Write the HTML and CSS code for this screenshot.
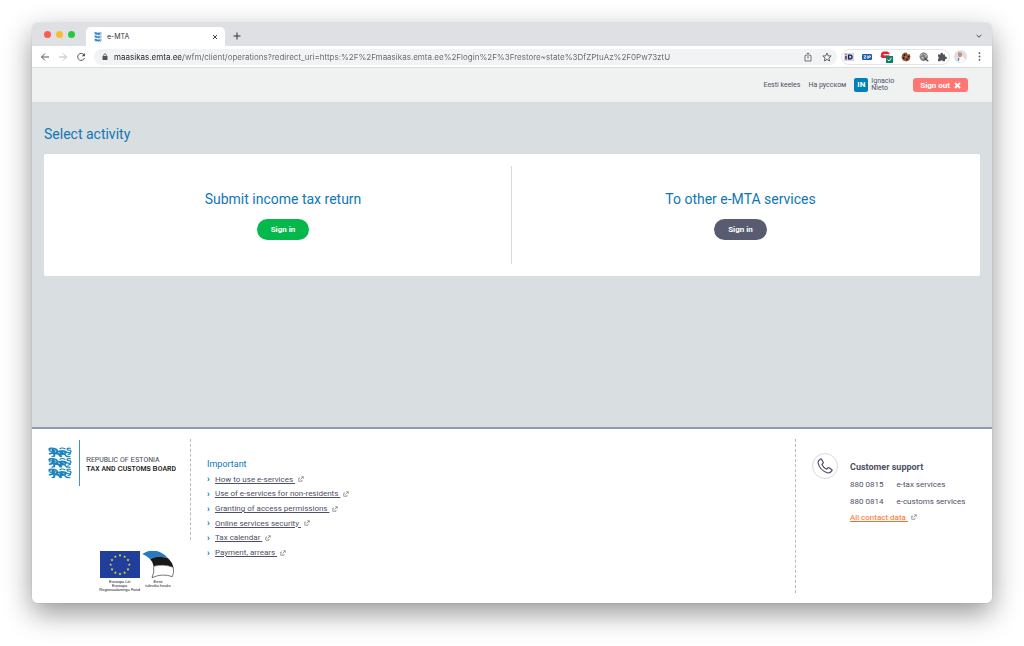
FILE: index.html
```html
<!DOCTYPE html>
<html lang="en">
<head>
    <meta charset="UTF-8">
    <meta name="viewport" content="width=device-width, initial-scale=1.0">
    <title>e-MTA</title>
    <link rel="stylesheet" href="styles.css">
</head>
<body>
    <!-- shared shapes -->
    <svg class="defs" width="0" height="0" aria-hidden="true">
        <symbol id="lion" viewBox="0 0 48 21">
            <path fill="currentColor" d="M1 2L5 0L13 1L18 3L21 7Q28 4 36 7L38 11L35 14L38 17L45 18V20H37L32 15L27 16L29 19L24 20L20 15L15 14L14 19L7 20V18L11 16L10 13L3 15L1 12L8 10L3 9L1 6Z"/>
            <path fill="none" stroke="currentColor" stroke-width="2.500" stroke-linecap="round" stroke-linejoin="round" d="M36 9Q46 14 46 8Q45 5 39 5Q36 1 45 2M24 3L28 1L34 3M40 15L45 13"/>
            <path fill="none" stroke="#fff" stroke-width="1.200" d="M5 4h3M3 7l5 0M13 4l3 3l-2 3M20 10l4 2M30 9l3 3"/>
        </symbol>
        <symbol id="external" viewBox="0 0 12 12">
            <path fill="none" stroke="currentColor" stroke-width="1.400" d="M4 4H1.500V10.500H8V8M5 7L10.500 1.500M6.500 1.500H10.500V5.500"/>
        </symbol>
        <symbol id="star" viewBox="-5 -5 10 10">
            <path fill="#f5e12b" d="M0-5L1.200-1.600H4.800L1.900.6L2.900 4L0 2L-2.900 4L-1.900.6L-4.800-1.600H-1.200Z"/>
        </symbol>
    </svg>

    <div class="window">
        <div class="tab-bar">
            <div class="lights">
                <span class="light red"></span>
                <span class="light yellow"></span>
                <span class="light green"></span>
            </div>
            <div class="tab">
                <svg class="favicon" viewBox="0 0 48 63" aria-hidden="true">
                    <use href="#lion" width="48" height="21"/>
                    <use href="#lion" y="21" width="48" height="21"/>
                    <use href="#lion" y="42" width="48" height="21"/>
                </svg>
                <span class="tab-title">e-MTA</span>
                <button class="icon-btn" aria-label="Close tab">
                    <svg width="6" height="6" viewBox="0 0 6 6"><path stroke="#333" stroke-width=".9" d="M1 1L5 5M5 1L1 5"/></svg>
                </button>
            </div>
            <button class="icon-btn new-tab" aria-label="New tab">
                <svg width="8" height="8" viewBox="0 0 8 8"><path stroke="#333" d="M4 .5V7.500M.5 4H7.500"/></svg>
            </button>
            <button class="icon-btn tab-search" aria-label="Search tabs">
                <svg width="6" height="6" viewBox="0 0 6 6"><path fill="none" stroke="#444" d="M.7 2L3 4.200L5.300 2"/></svg>
            </button>
        </div>

        <div class="toolbar">
            <button class="icon-btn" aria-label="Back">
                <svg width="10" height="10" viewBox="0 0 10 10"><path fill="none" stroke="#555" d="M9 5H1.500M5 1.500L1.500 5L5 8.500"/></svg>
            </button>
            <button class="icon-btn" aria-label="Forward">
                <svg width="10" height="10" viewBox="0 0 10 10"><path fill="none" stroke="#bbb" d="M1 5H8.500M5 1.500L8.500 5L5 8.500"/></svg>
            </button>
            <button class="icon-btn" aria-label="Reload">
                <svg width="10" height="10" viewBox="0 0 10 10"><path fill="none" stroke="#555" d="M8 2.800A3.500 3.500 0 1 0 8.500 6"/><path fill="#555" d="M9 1V4.300H5.700Z"/></svg>
            </button>
            <div class="address">
                <svg width="6" height="8" viewBox="0 0 6 8" aria-hidden="true"><rect x=".5" y="3" width="5" height="4" rx=".6" fill="#555"/><path fill="none" stroke="#555" stroke-width=".8" d="M1.700 3.500V2.200a1.300 1.300 0 0 1 2.600 0V3.500"/></svg>
                <input class="url" type="text" aria-label="Address" value="maasikas.emta.ee/wfm/client/operations?redirect_uri=https:%2F%2Fmaasikas.emta.ee%2Flogin%2F%3Frestore~state%3DfZPtuAz%2F0Pw73ztU">
                <button class="icon-btn" aria-label="Share">
                    <svg width="8" height="10" viewBox="0 0 8 10"><path fill="none" stroke="#666" stroke-width=".9" d="M2.500 3.500H1V9H7V3.500H5.500M4 6.500V1M2.300 2.500L4 .8L5.700 2.500"/></svg>
                </button>
                <button class="icon-btn" aria-label="Bookmark">
                    <svg width="10" height="10" viewBox="0 0 10 10"><path fill="none" stroke="#555" stroke-width=".9" d="M5 1L6.200 3.800L9.200 4L6.900 6L7.600 9L5 7.400L2.400 9L3.100 6L.8 4L3.800 3.800Z"/></svg>
                </button>
            </div>
            <div class="extensions">
                <button class="icon-btn" aria-label="ID card">
                    <svg width="10" height="10" viewBox="0 0 10 10"><rect y="1" width="10" height="8" fill="#d4d5e4"/><path fill="none" stroke="#1b1d55" stroke-width="1.300" d="M2 4V7.500M4.600 3.200V6.900H6.500A1.500 1.800 0 0 0 6.500 3.200H4"/><circle cx="2" cy="2.500" r=".8" fill="#e44"/></svg>
                </button>
                <button class="icon-btn" aria-label="Zip">
                    <svg width="10" height="10" viewBox="0 0 10 10"><rect y="2" width="10" height="6" rx="1.200" fill="#1859a8"/><path fill="none" stroke="#fff" stroke-width=".8" d="M1.500 3.800H4L1.800 6.200H4.200M5.300 3.500V6.500M6.700 6.600V3.900H8.400V5.200H6.700"/></svg>
                </button>
                <button class="icon-btn" aria-label="Link checker">
                    <svg width="13" height="12" viewBox="0 0 13 12"><path fill="#e02434" d="M3 .5H7.500L9.500 2V3.300H4V4.200H9.500L9 7H2L.5 5.500L1 4V2.500Z"/><path stroke="#fff" stroke-width=".6" d="M3 3.700H8"/><rect x="6" y="5" width="7" height="7" fill="#0f8060"/><path fill="none" stroke="#fff" d="M7.500 8.500L9 10L11.500 6.800"/></svg>
                </button>
                <button class="icon-btn" aria-label="Cookies">
                    <svg width="10" height="10" viewBox="0 0 10 10"><path fill="#8a5535" d="M4 .6L6 .8L6.500 2.500L8.500 2L9.500 4.500L8.500 8L5.500 9.500L2 8.500L.5 5.500L1.500 2Z"/><g fill="#2b1713"><circle cx="3.500" cy="3" r=".9"/><circle cx="2.700" cy="6" r=".9"/><circle cx="6" cy="7.300" r=".9"/><circle cx="7.500" cy="4.800" r=".9"/></g><circle cx="5" cy="5" r=".8" fill="#d39a68"/></svg>
                </button>
                <button class="icon-btn" aria-label="Search page">
                    <svg width="10" height="10" viewBox="0 0 10 10"><circle cx="4.700" cy="4.700" r="4.200" fill="#808080"/><path fill="none" stroke="#ddd" stroke-width=".8" d="M1.500 4L3.500 2M5 2L7.500 3.500L6.500 5M2 6.500L3.500 5L4.500 7"/><path stroke="#444" stroke-width="1.200" d="M5.500 6L9.300 9.300"/></svg>
                </button>
                <button class="icon-btn" aria-label="Extensions">
                    <svg width="10" height="10" viewBox="0 0 10 10"><path fill="#505357" d="M1 2.500H3.500A1.300 1.300 0 1 1 6 2.500H8V4.700A1.300 1.300 0 1 1 8 7V9.300H5.800A1.300 1.300 0 0 0 3.300 9.300H1V7A1.300 1.300 0 0 0 1 4.600Z"/></svg>
                </button>
            </div>
            <button class="icon-btn" aria-label="Profile">
                <svg width="13" height="13" viewBox="0 0 13 13"><circle cx="6.500" cy="6.500" r="6.500" fill="#dedfe0"/><path fill="#f9f9fa" d="M3 12L4 8L8 6L11 9V11Q7 14 3 12Z"/><ellipse cx="6" cy="4.300" rx="2" ry="2.900" fill="#c98c7d"/><path fill="#eee" d="M4 2Q6 0 8 3L5 2Z"/><path stroke="#4a82bb" stroke-width="1.200" d="M5 8L4 11"/></svg>
            </button>
            <button class="icon-btn menu-btn" aria-label="Menu">
                <svg width="3" height="9" viewBox="0 0 3 9" fill="#555"><circle cx="1.500" cy="1.200" r=".9"/><circle cx="1.500" cy="4.500" r=".9"/><circle cx="1.500" cy="7.800" r=".9"/></svg>
            </button>
        </div>

        <header class="header">
            <a class="lang" href="#">Eesti keeles</a>
            <a class="lang" href="#">На русском</a>
            <div class="user">
                <span class="initials">IN</span>
                <span class="user-name">Ignacio<br>Nieto</span>
            </div>
            <button class="sign-out">Sign out
                <svg width="7" height="7" viewBox="0 0 7 7" aria-hidden="true"><path stroke="#fff" stroke-width="1.800" d="M1 1L6 6M6 1L1 6"/></svg>
            </button>
        </header>

        <main class="main">
            <h1>Select activity</h1>
            <div class="card">
                <section class="activity">
                    <h2>Submit income tax return</h2>
                    <button class="btn btn-green">Sign in</button>
                </section>
                <section class="activity">
                    <h2>To other e-MTA services</h2>
                    <button class="btn btn-grey">Sign in</button>
                </section>
            </div>
        </main>

        <footer class="footer">
            <div class="brand">
                <div class="brand-top">
                    <svg class="lions" viewBox="0 0 48 63" aria-hidden="true">
                        <use href="#lion" width="48" height="21"/>
                        <use href="#lion" y="21" width="48" height="21"/>
                        <use href="#lion" y="42" width="48" height="21"/>
                    </svg>
                    <p class="brand-name">Republic of Estonia<br><strong>Tax and Customs Board</strong></p>
                </div>
                <div class="funds">
                    <figure>
                        <svg width="40" height="27" viewBox="0 0 120 81" aria-hidden="true">
                            <rect width="120" height="81" fill="#203f9d"/>
                            <use href="#star" x="55" y="8" width="10" height="10"/>
                            <use href="#star" x="69" y="12" width="10" height="10"/>
                            <use href="#star" x="79" y="22" width="10" height="10"/>
                            <use href="#star" x="83" y="36" width="10" height="10"/>
                            <use href="#star" x="79" y="50" width="10" height="10"/>
                            <use href="#star" x="69" y="60" width="10" height="10"/>
                            <use href="#star" x="55" y="64" width="10" height="10"/>
                            <use href="#star" x="41" y="60" width="10" height="10"/>
                            <use href="#star" x="31" y="50" width="10" height="10"/>
                            <use href="#star" x="27" y="36" width="10" height="10"/>
                            <use href="#star" x="31" y="22" width="10" height="10"/>
                            <use href="#star" x="41" y="12" width="10" height="10"/>
                        </svg>
                        <figcaption>Euroopa Liit<br>Euroopa<br>Regionaalarengu Fond</figcaption>
                    </figure>
                    <figure>
                        <svg width="32" height="27" viewBox="0 0 96 81" aria-hidden="true">
                            <path fill="#247bc3" d="M1 9Q27-9 55 4Q68 10 78 22Q49 12 24 24Q14 14 1 9Z"/>
                            <path fill="#191919" d="M24 24Q49 12 78 22Q91 34 94 49Q63 37 35 46Q34 34 24 24Z"/>
                            <path fill="#fff" stroke="#333" stroke-width="2" d="M35 46Q63 37 94 49Q97 64 91 77Q61 66 30 80Q38 63 35 46Z"/>
                        </svg>
                        <figcaption>Eesti<br>tuleviku heaks</figcaption>
                    </figure>
                </div>
            </div>

            <nav class="links">
                <h3>Important</h3>
                <ul>
                    <li><a href="#">How to use e-services&nbsp;</a><svg class="ext"><use href="#external"/></svg></li>
                    <li><a href="#">Use of e-services for non-residents&nbsp;</a><svg class="ext"><use href="#external"/></svg></li>
                    <li><a href="#">Granting of access permissions&nbsp;</a><svg class="ext"><use href="#external"/></svg></li>
                    <li><a href="#">Online services security&nbsp;</a><svg class="ext"><use href="#external"/></svg></li>
                    <li><a href="#">Tax calendar&nbsp;</a><svg class="ext"><use href="#external"/></svg></li>
                    <li><a href="#">Payment, arrears&nbsp;</a><svg class="ext"><use href="#external"/></svg></li>
                </ul>
            </nav>

            <div class="support">
                <span class="phone">
                    <svg width="16" height="16" viewBox="0 0 16 16" aria-hidden="true"><path fill="none" stroke="#4f5068" stroke-width="1.200" stroke-linejoin="round" d="M3.500 1Q1 2.500 1 4.500Q2.500 12.500 11 15Q13.500 15 15 12.700Q15.300 12 14.600 11.500L12 9.700Q11.300 9.300 10.700 10L9.700 11.200Q6.500 9.700 4.900 6.400L6 5.300Q6.500 4.800 6.100 4.100L4.600 1.300Q4.200.7 3.500 1Z"/></svg>
                </span>
                <div class="contact">
                    <h4>Customer support</h4>
                    <dl>
                        <dt>880 0815</dt><dd>e-tax services</dd>
                        <dt>880 0814</dt><dd>e-customs services</dd>
                    </dl>
                    <a class="all-contacts" href="#">All contact data&nbsp;</a><svg class="ext"><use href="#external"/></svg>
                </div>
            </div>
        </footer>
    </div>
</body>
</html>
```
FILE: styles.css
```css
* {
    box-sizing: border-box;
}
body {
    margin: 0;
    padding: 23px 32px 43px;
    min-height: 100vh;
    display: flex;
    background: #fff;
    font-family: Roboto, sans-serif;
    font-size: 8px;
    color: #4f5068;
}
h1, h2, h3, h4, p, ul, dl, dd, figure {
    margin: 0;
    padding: 0;
}
button {
    font-family: inherit;
    border: none;
    cursor: pointer;
}
svg {
    display: block;
    flex: none;
}
.defs {
    position: absolute;
}
.window {
    flex: 1;
    display: flex;
    flex-direction: column;
    border-radius: 6px;
    overflow: hidden;
    background: #fff;
    box-shadow: 0 10px 28px rgba(0, 0, 0, 0.42), 0 0 1px rgba(0, 0, 0, 0.3);
}

/* Browser bar */
.icon-btn {
    display: flex;
    padding: 0;
    background: none;
}
.tab-bar {
    display: flex;
    align-items: center;
    height: 23px;
    padding: 0 10px 0 12px;
    background: #dee0e4;
}
.lights {
    display: flex;
    gap: 5px;
    width: 42px;
}
.light {
    width: 7px;
    height: 7px;
    border-radius: 50%;
}
.red {
    background: #ff5a52;
}
.yellow {
    background: #fdbc2e;
}
.green {
    background: #28c840;
}
.tab {
    display: flex;
    align-items: center;
    align-self: flex-end;
    gap: 5px;
    width: 139px;
    height: 19px;
    padding: 0 7px 0 8px;
    border-radius: 5px 5px 0 0;
    background: #fff;
    font-family: Inter, sans-serif;
    font-size: 7px;
    color: #333;
}
.favicon {
    width: 8px;
    height: 10px;
    color: #2e80b8;
}
.tab-title {
    flex: 1;
}
.new-tab {
    margin: 3px 0 0 8px;
}
.tab-search {
    margin: 3px 0 0 auto;
}
.toolbar {
    display: flex;
    align-items: center;
    gap: 8px;
    height: 22px;
    padding: 0 11px 0 8px;
    border-bottom: 1px solid #dcdde0;
}
.address {
    flex: 1;
    display: flex;
    align-items: center;
    gap: 6px;
    height: 16px;
    margin-right: -4px;
    padding: 0 5px 0 8px;
    border-radius: 8px;
    background: #f1f3f4;
}
.address .icon-btn {
    margin-left: 4px;
}
.url {
    flex: 1;
    min-width: 0;
    padding: 0;
    border: none;
    outline: none;
    font-family: Inter, sans-serif;
    font-size: 8px;
    /* host part is darker than the path */
    background: linear-gradient(90deg, #222 69px, #666 69px);
    background-clip: text;
    -webkit-background-clip: text;
    -webkit-text-fill-color: transparent;
}
.extensions {
    display: flex;
    align-items: center;
    justify-content: space-between;
    width: 109px;
    height: 16px;
    margin-right: -4px;
    padding: 0 2px;
    border: 1px solid #e4e5e8;
    border-radius: 8px;
}
.menu-btn {
    margin-left: 3px;
}

/* Page header */
.header {
    display: flex;
    align-items: center;
    justify-content: flex-end;
    gap: 8px;
    height: 34px;
    padding-right: 24px;
    background: #f0f2f2;
    font-size: 7px;
}
.lang {
    color: #4f5068;
    text-decoration: none;
}
.user {
    display: flex;
    align-items: center;
    gap: 3px;
    margin-right: 11px;
    line-height: 7px;
}
.initials {
    width: 14px;
    height: 14px;
    border-radius: 2px;
    background: #0080bb;
    color: #fff;
    font-size: 8px;
    font-weight: 700;
    line-height: 14px;
    text-align: center;
}
.sign-out {
    display: flex;
    align-items: center;
    gap: 4px;
    height: 14px;
    padding: 0 7px;
    border-radius: 3px;
    background: #ff7673;
    color: #fff;
    font-size: 8px;
    font-weight: 700;
}

/* Activities */
.main {
    flex: 1;
    padding: 23px 12px;
    background: #d9dee1;
}
h1, h2 {
    color: #0f77b5;
    font-size: 14px;
    font-weight: 400;
    line-height: 18px;
}
.card {
    display: grid;
    grid-template-columns: 1fr 1fr;
    margin-top: 11px;
    padding: 12px 11px;
    border-radius: 2px;
    background: #fff;
}
.activity {
    display: flex;
    flex-direction: column;
    align-items: center;
    gap: 11px;
    padding: 24px 0;
}
.activity:first-child {
    border-right: 1px solid #d9dadd;
}
.btn {
    height: 21px;
    padding: 0 14px;
    border-radius: 11px;
    color: #fff;
    font-size: 8px;
    font-weight: 700;
}
.btn-green {
    background: #04b84c;
}
.btn-grey {
    background: #595b70;
}

/* Footer */
.footer {
    display: grid;
    grid-template-columns: 159px 1fr 197px;
    padding: 10px 0;
    border-top: 2px solid #8e9ab1;
    background: #fff;
}
.brand-top {
    display: flex;
    height: 101px;
    padding: 1px 0 0 16px;
    border-right: 1px dashed #b9bac6;
}
.lions {
    width: 24px;
    height: 32px;
    margin-top: 7px;
    color: #1d83bd;
}
.brand-name {
    height: 46px;
    margin-left: 7px;
    padding: 15px 0 0 6px;
    border-left: 1px solid #3b94c5;
    font-size: 8px;
    font-variant: small-caps;
    line-height: 9px;
    white-space: nowrap;
}
.brand-name strong {
    color: #222;
    font-weight: 500;
}
.funds {
    display: flex;
    justify-content: flex-end;
    gap: 2px;
    margin-top: 11px;
    padding-right: 17px;
}
figure {
    display: flex;
    flex-direction: column;
    align-items: center;
}
figcaption {
    margin-top: 2px;
    font-family: "Liberation Sans", Arial, sans-serif;
    font-size: 4px;
    line-height: 4px;
    text-align: center;
    color: #111;
}
.links {
    padding: 19px 16px 0;
}
h3 {
    color: #0f77b5;
    font-size: 9px;
    font-weight: 400;
    line-height: 12px;
}
ul {
    display: grid;
    grid-auto-rows: 1fr;
    height: 88px;
    margin-top: 2px;
    list-style: none;
}
li {
    display: flex;
    align-items: center;
}
li::before {
    content: "›";
    width: 8px;
    color: #0f77b5;
    font-size: 9px;
    font-weight: 900;
}
.links a {
    color: #4f5068;
}
.ext {
    display: inline-block;
    width: 6px;
    height: 6px;
    margin-left: 3px;
    color: #777;
}
.support {
    display: flex;
    gap: 12px;
    min-height: 154px;
    padding: 14px 0 0 16px;
    border-left: 1px dashed #b9bac6;
}
.phone {
    display: flex;
    align-items: center;
    justify-content: center;
    width: 26px;
    height: 26px;
    border: 1px solid #d5dadd;
    border-radius: 50%;
}
.contact {
    padding-top: 8px;
}
h4 {
    font-size: 9px;
    font-weight: 700;
    line-height: 12px;
}
dl {
    display: grid;
    grid-template-columns: auto auto;
    column-gap: 13px;
    margin-top: 3px;
    line-height: 17px;
}
.all-contacts {
    color: #ff6b1a;
    line-height: 16px;
}
```
